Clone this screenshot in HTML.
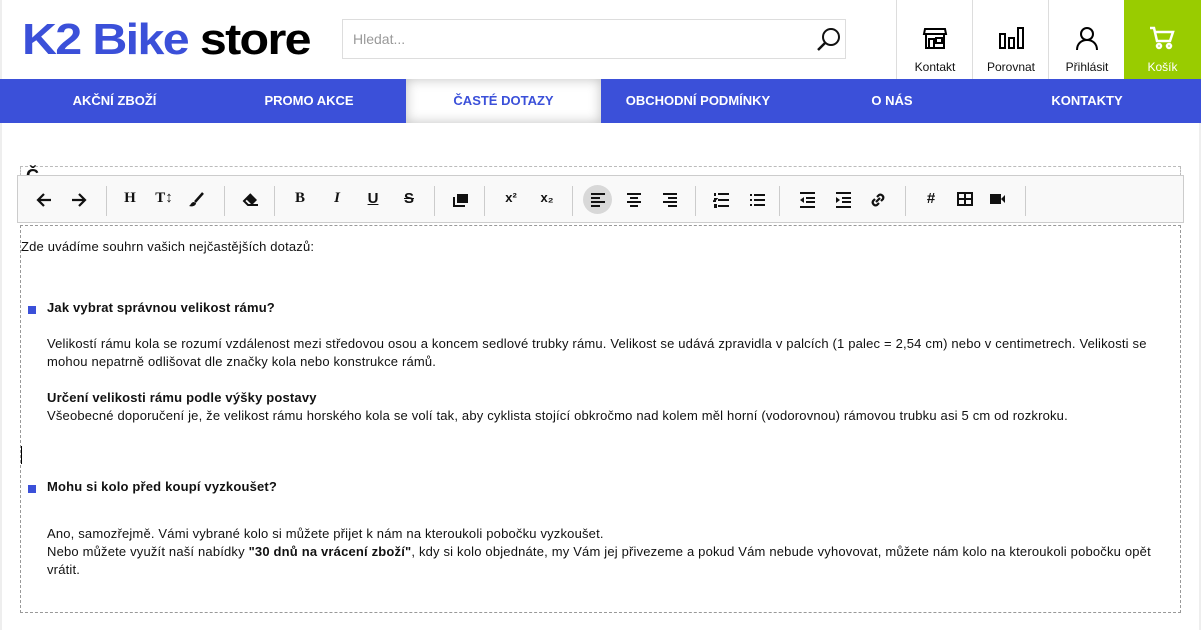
<!DOCTYPE html>
<html><head><meta charset="utf-8"><style>
*{margin:0;padding:0;box-sizing:border-box}
body{width:1201px;height:630px;overflow:hidden;background:#fff;font-family:"Liberation Sans",sans-serif;position:relative;color:#111}
.a{position:absolute}
.logo{left:22px;top:14px;font-size:44px;font-weight:bold;letter-spacing:-1.5px;line-height:52px;transform:scaleX(1.1);transform-origin:left;white-space:nowrap}
.search{left:342px;top:19px;width:504px;height:40px;border:1px solid #ddd;font-size:14px;color:#999;padding:11px 10px}
.hb{top:0;width:77px;height:79px;border-left:1px solid #ddd;text-align:center;font-size:12px}
.hb span{position:absolute;left:0;right:0;top:60px}
.hb svg{position:absolute;left:25px;top:25px}
.nav{left:0;top:79px;width:1201px;height:44px;background:#3b50d9}
.nav div{position:absolute;top:0;height:44px;line-height:44px;color:#fff;font-weight:bold;font-size:13px;text-align:center}
.tb{left:17px;top:175px;width:1167px;height:48px;background:#f9f9f9;border:1px solid #ccc}
.tb i{position:absolute;top:10px;width:1px;height:30px;background:#ccc}
.tb b{position:absolute;top:14px;font-size:15px;font-style:normal;text-align:center;width:26px;color:#111}
.tb svg{position:absolute;top:16px}
.t{font-size:13px;white-space:nowrap;line-height:18px;letter-spacing:0.18px}
.bul{width:8px;height:8px;background:#3b50d9}
</style></head><body>
<div class="a" style="left:0;top:0;width:2px;height:630px;background:#eee"></div>
<div class="a" style="right:0;top:123px;width:2px;height:507px;background:#eee"></div>
<div class="a logo"><span style="color:#3b50d9">K2 Bike</span> <span style="color:#000">store</span></div>
<div class="a search">Hledat...</div>
<svg class="a" style="left:815px;top:26px" width="28" height="28" viewBox="0 0 28 28"><circle cx="16" cy="11" r="8" fill="none" stroke="#111" stroke-width="2"/><path d="M10 17 3 24" stroke="#111" stroke-width="2.5"/></svg>
<div class="a hb" style="left:896px"><svg width="26" height="26" viewBox="0 0 26 26" fill="none" stroke="#000" stroke-width="2"><path d="M3 4h20l1 5H2zM4 9v14h18V9M7 23v-9h5v9M14 13h6v5h-6z"/></svg><span>Kontakt</span></div>
<div class="a hb" style="left:972px"><svg width="28" height="26" viewBox="0 0 28 26" fill="none" stroke="#000" stroke-width="2"><rect x="2" y="9" width="5" height="14"/><rect x="11" y="13" width="5" height="10"/><rect x="20" y="3" width="5" height="20"/></svg><span>Porovnat</span></div>
<div class="a hb" style="left:1048px"><svg width="26" height="26" viewBox="0 0 26 26" fill="none" stroke="#000" stroke-width="2"><circle cx="13" cy="9" r="6"/><path d="M3 25c0-6 4-10 10-10s10 4 10 10"/></svg><span>Přihlásit</span></div>
<div class="a hb" style="left:1124px;background:#99cc00;color:#fff;border:none;width:77px"><svg width="26" height="26" viewBox="0 0 26 26" fill="none" stroke="#fff" stroke-width="2.5"><path d="M1 3h4l3 13h13l3-9H7"/><circle cx="10" cy="21" r="2"/><circle cx="20" cy="21" r="2"/></svg><span>Košík</span></div>
<div class="a nav">
<div style="left:0;width:229px">AKČNÍ ZBOŽÍ</div>
<div style="left:212px;width:194px">PROMO AKCE</div>
<div style="left:406px;width:195px;background:#fff;color:#3b50d9;box-shadow:inset 0 0 12px rgba(0,0,0,.25)">ČASTÉ DOTAZY</div>
<div style="left:601px;width:194px">OBCHODNÍ PODMÍNKY</div>
<div style="left:795px;width:194px">O NÁS</div>
<div style="left:989px;width:196px">KONTAKTY</div>
</div>
<div class="a" style="left:20px;top:166px;width:1161px;height:10px;border:1px dashed #bbb;border-bottom:none"></div>
<div class="a" style="left:26px;top:166px;font-size:18px;font-weight:bold">Č</div>
<div class="a tb">
<svg style="left:18px" width="16" height="16" viewBox="0 0 16 16"><path d="M15 8H2M8 2 2 8l6 6" fill="none" stroke="#111" stroke-width="2.2"/></svg>
<svg style="left:53px" width="16" height="16" viewBox="0 0 16 16"><path d="M1 8h13M8 2l6 6-6 6" fill="none" stroke="#111" stroke-width="2.2"/></svg>
<i style="left:88px"></i>
<b style="left:99px;font-family:'Liberation Serif',serif;font-weight:bold">H</b><b style="left:133px;font-family:'Liberation Serif',serif;font-weight:bold">T↕</b>
<svg style="left:170px" width="16" height="16" viewBox="0 0 16 16"><path d="M15 1 7 10" stroke="#111" stroke-width="2.5"/><path d="M6 10c-3 0-3 3-5 4 3 1 7 0 7-3z" fill="#111"/></svg>
<i style="left:206px"></i>
<svg style="left:224px" width="18" height="16" viewBox="0 0 18 16"><path d="M9 2 2 9l4 4h10" fill="none" stroke="#111" stroke-width="2"/><path d="M9 2l6 6-5 5-6-6z" fill="#111"/></svg>
<i style="left:256px"></i>
<b style="left:269px;font-family:'Liberation Serif',serif;font-weight:bold">B</b><b style="left:306px;font-family:'Liberation Serif',serif;font-weight:bold;font-style:italic">I</b><b style="left:342px;text-decoration:underline;font-weight:bold">U</b><b style="left:378px;text-decoration:line-through;font-weight:bold">S</b><i style="left:416px"></i>
<svg style="left:435px" width="16" height="16" viewBox="0 0 16 16"><rect x="4" y="2" width="11" height="9" fill="#111"/><path d="M1 5v9h11" fill="none" stroke="#111" stroke-width="2"/></svg>
<i style="left:466px"></i>
<b style="left:480px;font-weight:bold;font-size:13px">x²</b><b style="left:516px;font-weight:bold;font-size:13px">x₂</b><i style="left:554px"></i>
<div class="a" style="left:565px;top:9px;width:29px;height:29px;border-radius:50%;background:#d8d8d8"></div>
<svg style="left:572px" width="16" height="16" viewBox="0 0 16 16" stroke="#111" stroke-width="2"><path d="M1 2h14M1 6h9M1 10h14M1 14h9"/></svg>
<svg style="left:608px" width="16" height="16" viewBox="0 0 16 16" stroke="#111" stroke-width="2"><path d="M1 2h14M4 6h8M1 10h14M4 14h8"/></svg>
<svg style="left:644px" width="16" height="16" viewBox="0 0 16 16" stroke="#111" stroke-width="2"><path d="M1 2h14M6 6h9M1 10h14M6 14h9"/></svg>
<i style="left:677px"></i>
<svg style="left:695px" width="16" height="16" viewBox="0 0 16 16" stroke="#111" stroke-width="2"><path d="M5 2h11M5 8h11M5 14h11M2 1v3M1 7h2l-2 2h2M1 13h2v2H1"/></svg>
<svg style="left:731px" width="16" height="16" viewBox="0 0 16 16" stroke="#111" stroke-width="2"><path d="M5 3h11M5 8h11M5 13h11M1 3h2M1 8h2M1 13h2"/></svg>
<i style="left:761px"></i>
<svg style="left:781px" width="16" height="16" viewBox="0 0 16 16" stroke="#111" stroke-width="2"><path d="M1 1h15M7 6h9M7 10h9M1 15h15"/><path d="M5 5 1 8l4 3z" fill="#111" stroke="none"/></svg>
<svg style="left:817px" width="16" height="16" viewBox="0 0 16 16" stroke="#111" stroke-width="2"><path d="M1 1h15M7 6h9M7 10h9M1 15h15"/><path d="M1 5l4 3-4 3z" fill="#111" stroke="none"/></svg>
<svg style="left:852px" width="16" height="16" viewBox="0 0 16 16" fill="none" stroke="#111" stroke-width="2.2"><path d="M7 5l2-2a3 3 0 0 1 4 4l-2 2M9 11l-2 2a3 3 0 0 1-4-4l2-2M6 10l4-4"/></svg>
<i style="left:887px"></i>
<b style="left:900px;font-weight:bold">#</b>
<svg style="left:939px" width="16" height="14" viewBox="0 0 16 14"><rect x="1" y="1" width="14" height="12" fill="none" stroke="#111" stroke-width="2"/><path d="M1 7h14M8 1v12" stroke="#111" stroke-width="2"/></svg>
<svg style="left:972px" width="16" height="14" viewBox="0 0 16 14"><rect x="0" y="2" width="11" height="10" fill="#111"/><path d="M11 7l4-4v8z" fill="#111"/></svg>
<i style="left:1007px"></i>
</div>
<div class="a" style="left:20px;top:225px;width:1161px;height:388px;border:1px dashed #999"></div>
<div class="a t" style="left:21px;top:238px">Zde uvádíme souhrn vašich nejčastějších dotazů:</div>
<div class="a bul" style="left:28px;top:306px"></div>
<div class="a t" style="left:47px;top:299px;font-weight:bold">Jak vybrat správnou velikost rámu?</div>
<div class="a t" style="left:47px;top:335px">Velikostí rámu kola se rozumí vzdálenost mezi středovou osou a koncem sedlové trubky rámu. Velikost se udává zpravidla v palcích (1 palec = 2,54 cm) nebo v centimetrech. Velikosti se<br>mohou nepatrně odlišovat dle značky kola nebo konstrukce rámů.</div>
<div class="a t" style="left:47px;top:389px;font-weight:bold">Určení velikosti rámu podle výšky postavy</div>
<div class="a t" style="left:47px;top:407px">Všeobecné doporučení je, že velikost rámu horského kola se volí tak, aby cyklista stojící obkročmo nad kolem měl horní (vodorovnou) rámovou trubku asi 5 cm od rozkroku.</div>
<div class="a" style="left:21px;top:446px;width:1px;height:18px;background:#000"></div>
<div class="a bul" style="left:28px;top:485px"></div>
<div class="a t" style="left:47px;top:478px;font-weight:bold">Mohu si kolo před koupí vyzkoušet?</div>
<div class="a t" style="left:47px;top:525px">Ano, samozřejmě. Vámi vybrané kolo si můžete přijet k nám na kteroukoli pobočku vyzkoušet.<br>Nebo můžete využít naší nabídky <b>"30 dnů na vrácení zboží"</b>, kdy si kolo objednáte, my Vám jej přivezeme a pokud Vám nebude vyhovovat, můžete nám kolo na kteroukoli pobočku opět<br>vrátit.</div>
</body></html>
